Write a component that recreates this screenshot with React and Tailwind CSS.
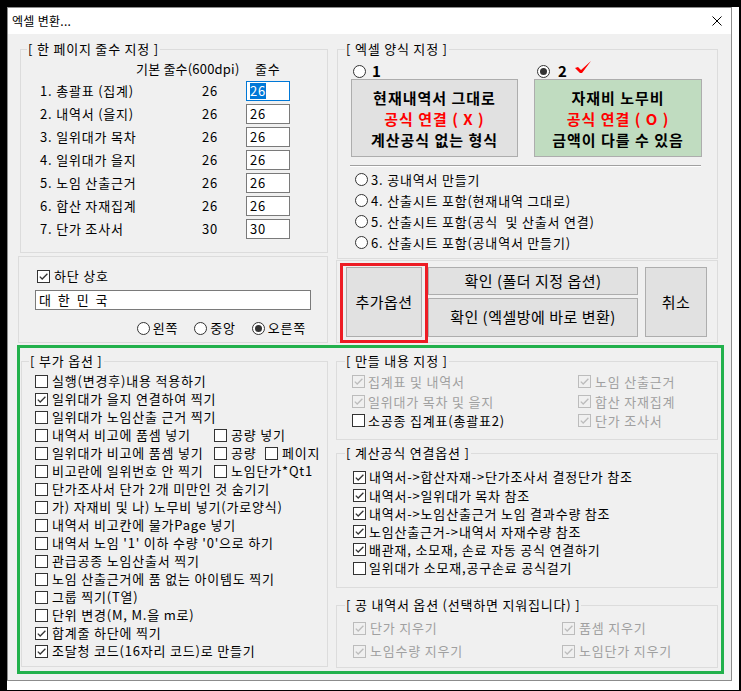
import React from "react";

function Check({ checked, disabled }) {
  return (
    <span
      className={
        disabled
          ? "w-[13px] h-[13px] shrink-0 border border-[#bcbcbc] flex items-center justify-center"
          : "w-[13px] h-[13px] shrink-0 border border-[#333333] bg-white flex items-center justify-center"
      }
    >
      {checked && (
        <svg width="11" height="11" viewBox="0 0 11 11">
          <polyline
            points="1.8,5.6 4.2,8 9.4,2.8"
            fill="none"
            stroke={disabled ? "#bcbcbc" : "#333333"}
            strokeWidth="1.3"
          />
        </svg>
      )}
    </span>
  );
}

function Radio({ checked }) {
  return (
    <span className="w-[13px] h-[13px] shrink-0 rounded-full border border-[#333333] bg-white flex items-center justify-center">
      {checked && <span className="w-[7px] h-[7px] rounded-full bg-[#333333]" />}
    </span>
  );
}

function CheckItem({ checked, disabled, label, className = "" }) {
  return (
    <div className={"flex items-center gap-[4px] " + className}>
      <Check checked={checked} disabled={disabled} />
      <span className={disabled ? "whitespace-nowrap text-[#a0a0a0]" : "whitespace-nowrap"}>{label}</span>
    </div>
  );
}

function Btn({ className = "", children }) {
  return (
    <div className={"flex items-center justify-center border border-[#adadad] bg-[#e1e1e1] text-[15px] tracking-[0.5px] " + className}>
      {children}
    </div>
  );
}

function Group({ label, labelClass = "ml-[6px]", className = "", children }) {
  return (
    <fieldset className={"border border-[#dcdcdc] min-w-0 " + className}>
      {label && (
        <legend className={"px-[1px] leading-[16px] whitespace-nowrap " + labelClass}>{label}</legend>
      )}
      {children}
    </fieldset>
  );
}

const lineRows = [
  ["1. 총괄표 (집계)", "26"],
  ["2. 내역서 (을지)", "26"],
  ["3. 일위대가 목차", "26"],
  ["4. 일위대가 을지", "26"],
  ["5. 노임 산출근거", "26"],
  ["6. 합산 자재집계", "26"],
  ["7. 단가 조사서", "30"],
];

const extraRows = [
  [{ label: "실행(변경후)내용 적용하기" }],
  [{ label: "일위대가 을지 연결하여 찍기", checked: true }],
  [{ label: "일위대가 노임산출 근거 찍기" }],
  [{ label: "내역서 비고에  품셈 넣기", w: "w-[179px]" }, { label: "공량 넣기" }],
  [{ label: "일위대가 비고에  품셈 넣기", w: "w-[179px]" }, { label: "공량", w: "w-[51px]" }, { label: "페이지" }],
  [{ label: "비고란에 일위번호 안 찍기", w: "w-[179px]" }, { label: "노임단가*Qt1" }],
  [{ label: "단가조사서 단가 2개 미만인 것 숨기기" }],
  [{ label: "가) 자재비 및 나) 노무비 넣기(가로양식)" }],
  [{ label: "내역서 비고칸에 물가Page 넣기" }],
  [{ label: "내역서 노임 '1' 이하 수량 '0'으로 하기" }],
  [{ label: "관급공종 노임산출서 찍기" }],
  [{ label: "노임 산출근거에 품 없는 아이템도 찍기" }],
  [{ label: "그룹 찍기(T열)" }],
  [{ label: "단위 변경(M, M.을 m로)" }],
  [{ label: "합계줄 하단에 찍기", checked: true }],
  [{ label: "조달청 코드(16자리 코드)로 만들기", checked: true }],
];

const makeRows = [
  ["집계표 및 내역서", true, "노임 산출근거"],
  ["일위대가 목차 및 을지", true, "합산 자재집계"],
  ["소공종 집계표(총괄표2)", false, "단가 조사서"],
];

const formulaRows = [
  ["내역서->합산자재->단가조사서 결정단가 참조", true],
  ["내역서->일위대가 목차 참조", true],
  ["내역서->노임산출근거 노임 결과수량 참조", true],
  ["노임산출근거->내역서 자재수량 참조", true],
  ["배관재, 소모재, 손료 자동 공식 연결하기", true],
  ["일위대가 소모재,공구손료 공식걸기", false],
];

function App() {
  return (
    <div className="w-[741px] h-[691px] bg-black pl-[7px] pt-[7px] pr-[2px] pb-[1px] font-['Noto_Sans_CJK_KR','Noto_Sans',sans-serif] text-[13px] tracking-[0.8px] text-black">
      <div className="w-full h-full bg-white">
        <div className="w-[725px] h-[674px] border border-[#8c8c8c] flex flex-col">
          {/* title bar */}
          <div className="h-[26px] shrink-0 bg-white flex items-center justify-between pl-[4px] pr-[9px] text-[12px] tracking-[0.3px]">
            <span>엑셀 변환...</span>
            <svg width="10" height="10" viewBox="0 0 10 10">
              <path d="M0.5 0.5 L9.5 9.5 M9.5 0.5 L0.5 9.5" stroke="#000" strokeWidth="1" />
            </svg>
          </div>

          {/* body */}
          <div className="flex-1 bg-[#f0f0f0] pl-[10px] pt-[7px]">
            <div className="flex">
              {/* left column */}
              <div className="w-[310px]">
                <Group label="[ 한 페이지 줄수 지정 ]" className="ml-[2px] w-[308px] h-[212px]">
                  <div className="mt-[2px] h-[20px] flex items-center pl-[115px] whitespace-nowrap">
                    <span className="w-[119px] shrink-0 tracking-[0.2px]">기본 줄수(600dpi)</span>
                    <span>줄수</span>
                  </div>
                  {lineRows.map(([name, n], i) => (
                    <div key={name} className="h-[23px] flex items-center pl-[19px]">
                      <span className="w-[162px]">{name}</span>
                      <span className="w-[44px]">{n}</span>
                      <div
                        className={
                          i === 0
                            ? "w-[44px] h-[20px] border border-[#0078d7] bg-white pl-[3px] flex items-center"
                            : "w-[44px] h-[20px] border border-[#7a7a7a] bg-white pl-[3px] flex items-center"
                        }
                      >
                        <span className={i === 0 ? "bg-[#0078d7] text-white leading-[16px]" : "leading-[16px]"}>{n}</span>
                      </div>
                    </div>
                  ))}
                </Group>

                <Group className="mt-[3px] w-[310px] h-[87px]">
                  <CheckItem checked label="하단 상호" className="mt-[10px] h-[18px] pl-[18px]" />
                  <div className="mt-[5px] ml-[16px] w-[276px] h-[20px] border border-[#7a7a7a] bg-white pl-[3px] flex items-center tracking-[2px]">
                    대 한 민 국
                  </div>
                  <div className="mt-[10px] h-[16px] flex items-center justify-end pr-[21px] gap-[16px]">
                    <div className="flex items-center gap-[3px]">
                      <Radio />
                      <span>왼쪽</span>
                    </div>
                    <div className="flex items-center gap-[3px]">
                      <Radio />
                      <span>중앙</span>
                    </div>
                    <div className="flex items-center gap-[3px]">
                      <Radio checked />
                      <span>오른쪽</span>
                    </div>
                  </div>
                </Group>
              </div>

              {/* right column */}
              <div className="ml-[8px] w-[382px]">
                <Group label="[ 엑셀 양식 지정 ]" labelClass="ml-[7px]" className="ml-[1px] w-[381px] h-[218px]">
                  <div className="mt-[6px] h-[16px] flex items-center pl-[15px]">
                    <div className="w-[184px] flex items-center gap-[6px]">
                      <Radio />
                      <span className="text-[15px] font-bold">1</span>
                    </div>
                    <div className="flex items-center gap-[8px]">
                      <Radio checked />
                      <span className="text-[15px] font-bold">2</span>
                    </div>
                    <svg width="18" height="14" viewBox="0 0 18 14" className="ml-[6px] mb-[8px]">
                      <path d="M1 8 L4 7 L7 10 L17 1 L8 13 L6 13 Z" fill="#ff0000" />
                    </svg>
                  </div>
                  <div className="flex pl-[13px] gap-[16px]">
                    <Btn className="w-[167px] h-[78px] flex-col font-bold leading-[21px] tracking-[1px]">
                      <span>현재내역서 그대로</span>
                      <span className="text-[#ff0000]">공식 연결 ( X )</span>
                      <span>계산공식 없는 형식</span>
                    </Btn>
                    <div className="w-[168px] h-[78px] flex flex-col items-center justify-center border border-[#adadad] bg-[#c0dcc0] text-[15px] font-bold leading-[21px] tracking-[1px]">
                      <span>자재비 노무비</span>
                      <span className="text-[#ff0000]">공식 연결 ( O )</span>
                      <span>금액이 다를 수 있음</span>
                    </div>
                  </div>
                  <div className="mt-[8px] ml-[12px] w-[351px] h-[2px] border-t border-t-[#a0a0a0] border-b border-b-white" />
                  <div className="mt-[2px]">
                    {["3. 공내역서 만들기", "4. 산출시트 포함(현재내역 그대로)", "5. 산출시트 포함(공식  및 산출서 연결)", "6. 산출시트 포함(공내역서 만들기)"].map((t) => (
                      <div key={t} className="h-[21px] flex items-center pl-[17px] gap-[3px]">
                        <Radio />
                        <span className="whitespace-pre">{t}</span>
                      </div>
                    ))}
                  </div>
                </Group>

                <Group className="mt-[1px] w-[382px] h-[83px]">
                  <div className="flex items-start pl-[3px] pt-[2px]">
                    <div className="w-[88px] h-[80px] shrink-0 border-[3px] border-[#ed1c24] pl-[3px] pt-[1px]">
                      <Btn className="w-[76px] h-[70px]">추가옵션</Btn>
                    </div>
                    <div className="mt-[4px] w-[210px] flex flex-col gap-[3px]">
                      <Btn className="h-[28px]">확인 (폴더 지정 옵션)</Btn>
                      <Btn className="h-[39px]">확인 (엑셀방에 바로 변환)</Btn>
                    </div>
                    <Btn className="ml-[7px] mt-[4px] w-[62px] h-[70px]">취소</Btn>
                  </div>
                </Group>
              </div>
            </div>

            {/* lower options, marked with a green frame */}
            <div className="ml-[-1px] mt-[2px] w-[707px] h-[329px] border-[3px] border-[#22b14c] flex pt-[5px]">
              <Group label="[ 부가 옵션 ]" labelClass="ml-[7px]" className="ml-[1px] w-[307px] h-[314px]">
                <div className="pt-[3px] pl-[13px]">
                  {extraRows.map((row, i) => (
                    <div key={i} className="h-[18px] flex items-center">
                      {row.map((c) => (
                        <CheckItem key={c.label} label={c.label} checked={c.checked} className={c.w ? c.w + " shrink-0" : ""} />
                      ))}
                    </div>
                  ))}
                </div>
              </Group>

              <div className="ml-[8px] w-[382px]">
                <Group label="[ 만들 내용 지정 ]" labelClass="ml-[8px]" className="h-[87px]">
                  <div className="pt-[3px] pl-[15px]">
                    {makeRows.map(([a, dis, b]) => (
                      <div key={a} className="h-[19.5px] flex items-center">
                        <div className="w-[226px] shrink-0 flex items-center gap-[3px]">
                          <Check checked={dis} disabled={dis} />
                          <span className={dis ? "text-[#a0a0a0]" : ""}>{a}</span>
                        </div>
                        <CheckItem checked disabled label={b} />
                      </div>
                    ))}
                  </div>
                </Group>

                <Group label="[ 계산공식 연결옵션 ]" labelClass="ml-[8px]" className="mt-[5px] h-[143px]">
                  <div className="pt-[7px] pl-[16px]">
                    {formulaRows.map(([t, c]) => (
                      <div key={t} className="h-[18.2px] flex items-center gap-[3px]">
                        <Check checked={c} />
                        <span className="whitespace-nowrap">{t}</span>
                      </div>
                    ))}
                  </div>
                </Group>

                <Group label="[ 공 내역서 옵션 (선택하면 지워집니다) ]" labelClass="ml-[8px]" className="mt-[9px] h-[71px]">
                  <div className="pt-[3.5px] pl-[16px]">
                    <div className="h-[23px] flex items-center">
                      <CheckItem checked disabled label="단가 지우기" className="w-[209px] shrink-0" />
                      <CheckItem checked disabled label="품셈 지우기" />
                    </div>
                    <div className="h-[23px] flex items-center">
                      <CheckItem checked disabled label="노임수량 지우기" className="w-[209px] shrink-0" />
                      <CheckItem checked disabled label="노임단가 지우기" />
                    </div>
                  </div>
                </Group>
              </div>
            </div>
          </div>
        </div>
      </div>
    </div>
  );
}

export default App;
